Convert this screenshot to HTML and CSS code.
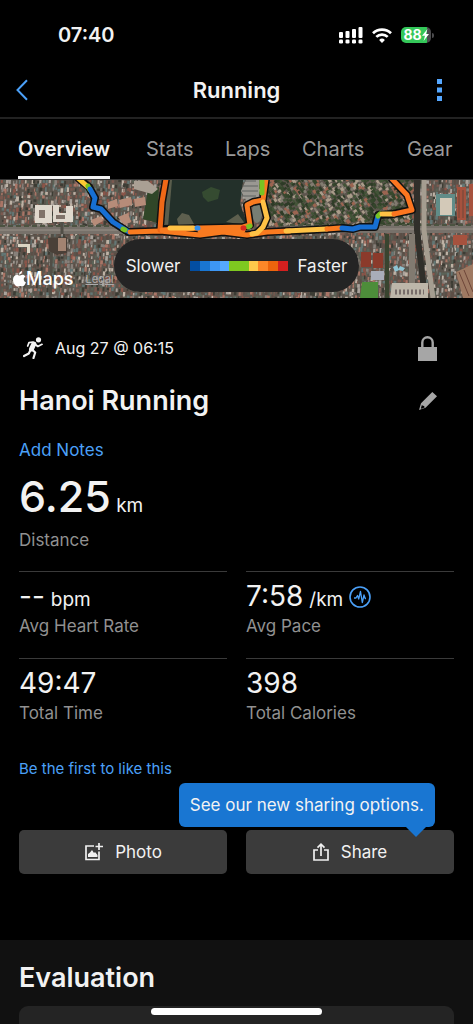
FILE: index.html
```
<!DOCTYPE html>
<html lang="en">
<head>
    <meta charset="UTF-8">
    <meta name="viewport" content="width=device-width, initial-scale=1.0">
    <title>Running</title>
    <link rel="stylesheet" href="styles.css">
</head>
<body>
    <div class="status-bar">
        <span class="clock">07:40</span>
        <div class="status-icons">
            <svg width="24" height="17" viewBox="0 0 24 17" fill="#fff">
                <rect x="0" y="5" width="4" height="6" rx="1"/>
                <rect x="6.5" y="4" width="4" height="7" rx="1"/>
                <rect x="13" y="2" width="4" height="9" rx="1"/>
                <rect x="19.5" y="0" width="4" height="11" rx="1"/>
                <rect x="0" y="12.5" width="4" height="4" rx="1.3"/>
                <rect x="6.5" y="12.5" width="4" height="4" rx="1.3"/>
                <rect x="13" y="12.5" width="4" height="4" rx="1.3"/>
                <rect x="19.5" y="12.5" width="4" height="4" rx="1.3"/>
            </svg>
            <svg width="20" height="15" viewBox="0 0 20 15" fill="none" stroke="#fff" stroke-width="2.7">
                <path d="M1 5.3a12.8 12.8 0 0 1 18 0"/>
                <path d="M4.3 8.9a8.2 8.2 0 0 1 11.4 0"/>
                <path d="M10 15l-2.9-3a4.1 4.1 0 0 1 5.8 0z" fill="#fff" stroke="none"/>
            </svg>
            <div class="battery">
                <span>88</span>
                <svg width="7" height="12" viewBox="0 0 7 12" fill="#fff"><path d="M5.5 0L0 6.8h3L1.6 12 7 5H4z"/></svg>
            </div>
        </div>
    </div>

    <header class="header">
        <button class="icon-button" aria-label="Back">
            <svg width="12" height="22" viewBox="0 0 12 22" fill="none" stroke="#4ba0f8" stroke-width="2"><path d="M11 1.3L1.5 11l9.5 9.7"/></svg>
        </button>
        <h1>Running</h1>
        <button class="icon-button more" aria-label="More">
            <svg width="5" height="22" viewBox="0 0 5 22" fill="#55a7ff"><path d="M0 0h5v5H0zM0 8.5h5v5H0zM0 17h5v5H0z"/></svg>
        </button>
    </header>

    <nav class="tabs">
        <a href="#overview" class="active">Overview</a>
        <a href="#stats">Stats</a>
        <a href="#laps">Laps</a>
        <a href="#charts">Charts</a>
        <a href="#gear">Gear</a>
    </nav>

    <main>
        <div class="map">
            <svg class="map-view" viewBox="0 180 473 118" preserveAspectRatio="xMidYMid slice">
                <rect y="180" width="473" height="118" fill="#5c554d"/>
                <g id="roofs"></g>

                <!-- lake and parks -->
                <path d="M169 180h74l-3 24 8 22-82 2z" fill="#23302a"/>
                <path d="M202 192l9-5 9 3-2 9-10 3-5-5z" fill="#354b31"/>
                <path d="M177 219l5-6 7 2 5 9-15 3zM226 222l12-8 8 11z" fill="#5d5f4e"/>
                <path d="M148 190l11-3-2 36-14-4z" fill="#304628"/>
                <path d="M167 180h5l-4 47h-4z" fill="#5a5d4c"/>
                <path d="M241 191l5-11h13v20l-11 4z" fill="#9a9892"/>
                <path d="M244 181h12M243 186h15M242 191h16M242 196h14" stroke="#5f6260"/>
                <ellipse cx="257" cy="213" rx="5" ry="10" fill="#777e73"/>

                <!-- roads -->
                <path d="M0 230h130M290 229h183" stroke="#77716a" stroke-width="8"/>
                <path d="M0 230h130M290 229h183" stroke="#999187" stroke-width="1"/>
                <path d="M0 226h130M290 225h183" stroke="#4c5341" stroke-width="2" stroke-dasharray="5 3"/>
                <path d="M417 180v50l8 68" fill="none" stroke="#302f2a" stroke-width="6"/>
                <path d="M424 180v50l9 68" fill="none" stroke="#a59d90" stroke-width="5"/>
                <path d="M412 234v64" stroke="#817a70" stroke-width="6"/>
                <path d="M387 234v64" stroke="#39442f" stroke-width="4"/>
                <path d="M52 234l-2 64M62 214v20" stroke="#514e46" stroke-width="3"/>

                <!-- large buildings -->
                <path d="M35 205h17v18H35zM53 205h6v8h7v-7h7v16H53z" fill="#dfd8cd"/>
                <path d="M39 210h6v8h-6zM56 215h9v4h-9z" fill="#80736a"/>
                <path d="M18 244h12v9h-3v-6h-9z" fill="#dbd5c4"/>
                <path d="M108 202l9-3 1 7-10 3zM119 200l12-3 1 8-12 3zM134 199l11-2 1 8-11 2zM118 217l10-4 3 9-7 3zM91 220l10-4 2 5-9 5z" fill="#b68c79"/>
                <path d="M134 181h14l10 8-6 5-18-5z" fill="#aaa094"/>
                <path d="M48 238l19-1v16l-10 2-8-4z" fill="#4a4038"/>
                <path d="M58 238h8v13h-8z" fill="#a28371"/>
                <path d="M361 252h10v15h-10zM373 253h10v15h-10z" fill="#8b3a2b"/>
                <path d="M371 271h13v9h-13z" fill="#a9adb9"/>
                <path d="M393 267l4-2 2 5-4 2zM400 266l5 2-2 3-5-1z" fill="#8fc4d2"/>
                <path d="M362 282h16v16h-18z" fill="#4d8d3a"/>
                <path d="M392 283h36v15h-38z" fill="#bdb6a9"/>
                <path d="M395 292h29" stroke="#786d6a" stroke-width="5" stroke-dasharray="2 2"/>
                <path d="M436 194h19v22h-19z" fill="#618c88"/>
                <path d="M440 198h12v17h-12z" fill="#d3c9b8"/>
                <path d="M457 187h9v33h-9zM469 184h4v32h-4zM453 235h14v10h-14z" fill="#a6523e"/>
                <path d="M456 272l17-8v34h-10z" fill="#9e7962"/>
                <path d="M459 190v28M463 190v28M459 272l10 24M464 270l9 22" stroke="#6e4639"/>

                <g class="route-edge">
                    <path d="M79 179L89 187L95 198L93 207L101 209L113 222L128 232L160 231L200 235L223 232L247 235L267 232L310 230L327 229L343 228L353 229L360 227L375 227L378 215L393 214L412 210L407 195L392 179"/>
                    <path d="M166 179L162 202L160 228M162 229L243 227L250 225L247 205L253 202L263 200L266 179M263 202L267 218L263 227L257 233"/>
                </g>
                <g class="route">
                    <path stroke="#fcc934" d="M79 179L88 187"/>
                    <path stroke="#79c322" d="M88 186L90 190"/>
                    <path stroke="#176fd3" d="M90 189L95 198L93 207L101 209L113 222L129 232"/>
                    <path stroke="#79c322" d="M123 229L125 230"/>
                    <path stroke="#f97b20" d="M130 232L160 231L200 235L223 232L247 235L267 232L290 231"/>
                    <path stroke="#ef6817" d="M166 179L162 202L160 230"/>
                    <path stroke="#f97b20" d="M162 230L200 228L243 227L250 225L247 205L253 202L263 200L266 179"/>
                    <path stroke="#f97b20" d="M200 231L243 230"/>
                    <path stroke="#ffc245" d="M170 228L193 228M263 202L267 218L263 227L257 233L252 234M286 231L327 229"/>
                    <path stroke="#79c322" d="M262 179L262 193M248 227L250 226"/>
                    <path stroke="#348fec" d="M197 228L198 228"/>
                    <path stroke="#d8291e" d="M243 228L244 228"/>
                    <path stroke="#f97b20" d="M327 229L340 228"/>
                    <path stroke="#176fd3" d="M342 228L353 229L360 227L375 227L378 216"/>
                    <path stroke="#79c322" d="M378 216L380 214"/>
                    <path stroke="#ffc245" d="M382 214L394 214"/>
                    <path stroke="#fc7620" d="M394 214L412 210L407 195L392 179"/>
                </g>
            </svg>
            <div class="map-credit">
                <svg width="13" height="16" viewBox="0 0 13 16" fill="#fff"><path d="M9 0c.1 2-1.3 3.6-3 3.7C5.800 1.900 7.300.300 9 0zM6.500 4.600c.8 0 1.700-.8 3-.8 1.100 0 2.200.6 2.900 1.600-2.500 1.500-2.100 4.800.6 5.900-.8 2.200-2.100 4.200-3.500 4.200-1 0-1.500-.6-2.700-.6s-1.700.6-2.600.6C2.300 15.500 0 11.800 0 8.600c0-3 1.900-4.700 3.800-4.700 1.200 0 2 .7 2.700.7z"/></svg>
                <span>Maps</span>
                <a href="#legal">Legal</a>
            </div>
            <div class="legend">
                <span>Slower</span>
                <div class="legend-scale">
                    <i class="s1"></i><i class="s2"></i><i class="s3"></i><i class="s4"></i><i class="s5"></i>
                    <i class="s5"></i><i class="s6"></i><i class="s7"></i><i class="s8"></i><i class="s9"></i>
                </div>
                <span>Faster</span>
            </div>
        </div>

        <section class="activity" id="overview">
            <div class="date-row">
                <svg width="20" height="22" viewBox="0 0 20 22" fill="none" stroke="#f2f2f2" stroke-linecap="round" stroke-linejoin="round">
                    <circle cx="15.500" cy="2.800" r="2.600" fill="#f2f2f2" stroke="none"/>
                    <path d="M10.800 7L8.500 12" stroke-width="5"/>
                    <path d="M10 5L6 5.600 4.700 9M12.500 7.500l2.300 2L19 7.300" stroke-width="1.700"/>
                    <path d="M9 12.500l3.200 3-1.700 5.500M7.500 13L5.800 16.500 1 19" stroke-width="2.200"/>
                </svg>
                <span>Aug 27 @ 06:15</span>
                <button class="icon-button" aria-label="Privacy">
                    <svg width="19" height="25" viewBox="0 0 19 25"><path d="M0 11h19v14H0z" fill="#a6a6a6"/><path d="M4.300 12V6.500a5.200 5.200 0 0 1 10.400 0V12" fill="none" stroke="#a6a6a6" stroke-width="2.400"/></svg>
                </button>
            </div>
            <div class="title-row">
                <h2>Hanoi Running</h2>
                <button class="icon-button" aria-label="Edit name">
                    <svg width="18" height="18" viewBox="0 0 18 18" fill="#a6a6a6"><path d="M13.300 0L18 4.300 6.500 15.800 0 18l2-6.700zM2.900 13l-1 3.300.4.400 3.300-1.200-.5-1.600-1.300-.1z" fill-rule="evenodd"/></svg>
                </button>
            </div>
            <a class="notes" href="#notes">Add Notes</a>

            <div class="distance">
                <p><strong>6.25</strong> <span>km</span></p>
                <span class="label">Distance</span>
            </div>

            <div class="stats">
                <div class="stat">
                    <p><span class="value">--</span> bpm</p>
                    <span class="label">Avg Heart Rate</span>
                </div>
                <div class="stat">
                    <p><span class="value">7:58</span> /km
                        <svg width="22" height="22" viewBox="0 0 22 22" fill="none" stroke="#4ba0f8"><circle cx="11" cy="11" r="10" stroke-width="1.600"/><path d="M5 12h2l1.500-2.500L9.700 13l1.800-7.500 1.800 11 1.700-7.500 1.200 3.500H17" stroke-width="1.300" stroke-linejoin="round"/></svg>
                    </p>
                    <span class="label">Avg Pace</span>
                </div>
                <div class="stat">
                    <p><span class="value">49:47</span></p>
                    <span class="label">Total Time</span>
                </div>
                <div class="stat">
                    <p><span class="value">398</span></p>
                    <span class="label">Total Calories</span>
                </div>
            </div>

            <a class="like" href="#like">Be the first to like this</a>

            <div class="actions">
                <button class="action">
                    <svg width="19" height="18" viewBox="0 0 19 18" fill="none" stroke="#f0f0f0" stroke-width="1.700"><path d="M10 3H2v13.500h13V8.500M15 0v7M11.500 3.500H19"/><path d="M4 14v-3l2-1.500L8 7l2 3 1-1 2.500 3v2z" fill="#f0f0f0" stroke="none"/></svg>
                    Photo
                </button>
                <div class="share">
                    <div class="tooltip" role="tooltip">See our new sharing options.</div>
                    <button class="action">
                        <svg width="16" height="18" viewBox="0 0 16 18" fill="none" stroke="#f0f0f0" stroke-width="1.700"><path d="M5 7H1v10h14V7h-4M8 13V1.500M4.500 4.700L8 1.200l3.500 3.500"/></svg>
                        Share
                    </button>
                </div>
            </div>
        </section>

        <section class="evaluation">
            <h2>Evaluation</h2>
            <div class="card"></div>
        </section>
    </main>
    <div class="home-indicator"></div>

    <script src="map.js"></script>
</body>
</html>
```
FILE: styles.css
```
* {
    box-sizing: border-box;
}
body {
    margin: 0;
    min-height: 100vh;
    display: flex;
    flex-direction: column;
    background: #000;
    color: #f2f2f2;
    font-family: Inter, "Liberation Sans", sans-serif;
    font-size: 17px;
    line-height: 24px;
}
h1, h2, p {
    margin: 0;
    font-weight: 600;
}
a {
    color: #4ba0f8;
    text-decoration: none;
}
button {
    font: inherit;
    color: inherit;
    border: none;
    cursor: pointer;
}
svg {
    display: block;
}
.icon-button {
    display: flex;
    padding: 0;
    background: none;
}

/* top bars */
.status-bar {
    display: flex;
    justify-content: space-between;
    align-items: center;
    height: 62px;
    padding: 8px 42px 0 58px;
}
.clock {
    font-size: 20px;
    font-weight: 600;
}
.status-icons {
    display: flex;
    align-items: center;
    gap: 9px;
}
.battery {
    position: relative;
    display: flex;
    align-items: center;
    justify-content: center;
    width: 30px;
    height: 16px;
    border-radius: 5px;
    background: linear-gradient(90deg, #34c759 88%, #4b4b4d 88%);
    font-size: 14px;
    font-weight: 700;
    color: #fff;
}
.battery::after {
    content: "";
    position: absolute;
    right: -3px;
    width: 2px;
    height: 5px;
    border-radius: 0 2px 2px 0;
    background: #4b4b4d;
}
.header {
    display: grid;
    grid-template-columns: 1fr auto 1fr;
    align-items: center;
    height: 57px;
    padding: 0 31px 0 16px;
    border-bottom: 2px solid #222;
}
.header h1 {
    font-size: 22px;
    padding-left: 15px;
}
.header .more {
    justify-self: end;
}
.tabs {
    display: grid;
    grid-template-columns: 128fr 79fr 77fr 105fr 66fr;
    height: 61px;
    padding-left: 18px;
    border-bottom: 1px solid #333;
    font-size: 20px;
}
.tabs a {
    justify-self: start;
    padding-top: 18px;
    color: #999;
}
.tabs .active {
    color: #f2f2f2;
    font-weight: 600;
    border-bottom: 3px solid #f2f2f2;
}
main {
    flex: 1;
    display: flex;
    flex-direction: column;
}

/* map */
.map {
    position: relative;
    height: 118px;
}
.map-view {
    width: 100%;
    height: 100%;
}
.route-edge, .route {
    fill: none;
    stroke-linecap: round;
    stroke-linejoin: round;
}
.route-edge {
    stroke: #111;
    stroke-width: 8;
}
.route {
    stroke-width: 5;
}
.map-credit {
    position: absolute;
    left: 13px;
    bottom: 7px;
    display: flex;
    align-items: center;
    font-size: 18px;
    font-weight: 500;
    color: #fff;
}
.map-credit a {
    margin-left: 12px;
    font-size: 11px;
    font-weight: 400;
    color: #aaa;
    text-decoration: underline;
}
.legend {
    position: absolute;
    left: 24%;
    right: 24%;
    bottom: 6px;
    height: 53px;
    display: flex;
    align-items: center;
    justify-content: center;
    gap: 10px;
    border-radius: 27px;
    background: #242424;
}
.legend-scale {
    display: flex;
    flex: 0 0 97px;
    height: 10px;
}
.legend-scale i {
    flex: 1;
}
.s1 { background: #034ea2; }
.s2 { background: #1976d2; }
.s3 { background: #3d96f4; }
.s4 { background: #55a9ff; }
.s5 { background: #7ec820; }
.s6 { background: #ffca4b; }
.s7 { background: #fc8728; }
.s8 { background: #ec640d; }
.s9 { background: #d3201f; }

/* activity */
.activity {
    display: flex;
    flex-direction: column;
    padding: 34px 19px 66px;
}
.date-row, .title-row {
    display: flex;
    align-items: center;
    padding-right: 17px;
}
.date-row {
    height: 32px;
    padding-left: 4px;
    gap: 12px;
    font-size: 16px;
}
.date-row .icon-button {
    margin-left: auto;
}
.title-row {
    justify-content: space-between;
    margin-top: 21px;
}
h2 {
    font-size: 27px;
    line-height: 32px;
}
.notes {
    align-self: start;
    margin-top: 21px;
}
.distance {
    margin-top: 12px;
}
.distance p {
    line-height: 44px;
    font-size: 19px;
    font-weight: 400;
}
.distance strong {
    font-size: 43px;
    font-weight: 500;
}
.label {
    display: block;
    color: #919191;
}
.stats {
    display: grid;
    grid-template-columns: 1fr 1fr;
    column-gap: 19px;
    margin-top: 19px;
}
.stat {
    height: 87px;
    padding-top: 7px;
    border-top: 1px solid #3a3a3a;
}
.stat p {
    display: flex;
    align-items: baseline;
    gap: 6px;
    height: 35px;
    line-height: 35px;
    font-size: 19px;
    font-weight: 400;
}
.stat .value {
    font-size: 28px;
}
.stat svg {
    align-self: center;
}
.like {
    align-self: start;
    margin-top: 12px;
    font-size: 15px;
}
.actions {
    display: grid;
    grid-template-columns: 1fr 1fr;
    column-gap: 19px;
    margin-top: 49px;
}
.action {
    display: flex;
    align-items: center;
    justify-content: center;
    gap: 12px;
    width: 100%;
    height: 44px;
    border-radius: 5px;
    background: #3b3b3b;
}
.share {
    position: relative;
}
.tooltip {
    position: absolute;
    right: 19px;
    bottom: 47px;
    padding: 10px 11px;
    border-radius: 6px;
    background: #1976d2;
    white-space: nowrap;
}
.tooltip::after {
    content: "";
    position: absolute;
    right: 9px;
    top: 100%;
    border: 10px solid transparent;
    border-top-color: #1976d2;
    border-bottom: none;
}

/* evaluation */
.evaluation {
    flex: 1;
    display: flex;
    flex-direction: column;
    padding: 22px 19px 0;
    background: #111;
}
.card {
    flex: 1;
    margin-top: 12px;
    border-radius: 9px 9px 0 0;
    background: #242424;
}
.home-indicator {
    position: fixed;
    left: 32%;
    right: 32%;
    bottom: 9px;
    height: 7px;
    border-radius: 4px;
    background: #fff;
}
```
FILE: map.js
```
// Rooftops, streets and trees of the aerial map
const roofs = document.getElementById('roofs');
const cityColors = ['#8b5549', '#a97566', '#87807a', '#aaa39c', '#3c3c34', '#637775', '#beb2a5', '#5c4d45', '#7b5a50', '#5b6357'];
const parkColors = ['#37482d', '#425437', '#9b6551', '#827c70', '#2e3b27', '#aa9c8a', '#34452b'];
let seed = 27;

function random() {
    seed = (seed * 16807) % 2147483647;
    return seed / 2147483647;
}

function addRoof(x, y, w, h, color, angle) {
    const rect = document.createElementNS('http://www.w3.org/2000/svg', 'rect');
    rect.setAttribute('x', x);
    rect.setAttribute('y', y);
    rect.setAttribute('width', w);
    rect.setAttribute('height', h);
    rect.setAttribute('fill', color);
    rect.setAttribute('transform', `rotate(${angle} ${x} ${y})`);
    roofs.appendChild(rect);
}

for (let y = 179; y < 298; y += 4) {
    for (let x = 0; x < 473; x += 3) {
        const green = x > 265 && x < 410 && y < 225;
        const colors = green ? parkColors : cityColors;
        const color = colors[Math.floor(random() * colors.length)];
        const size = green ? 2 : 1;
        addRoof(x + random() * 2, y + random() * 2, size + random() * 2, 2 + random() * 3, color, green ? -35 : 4);
    }
}
```
